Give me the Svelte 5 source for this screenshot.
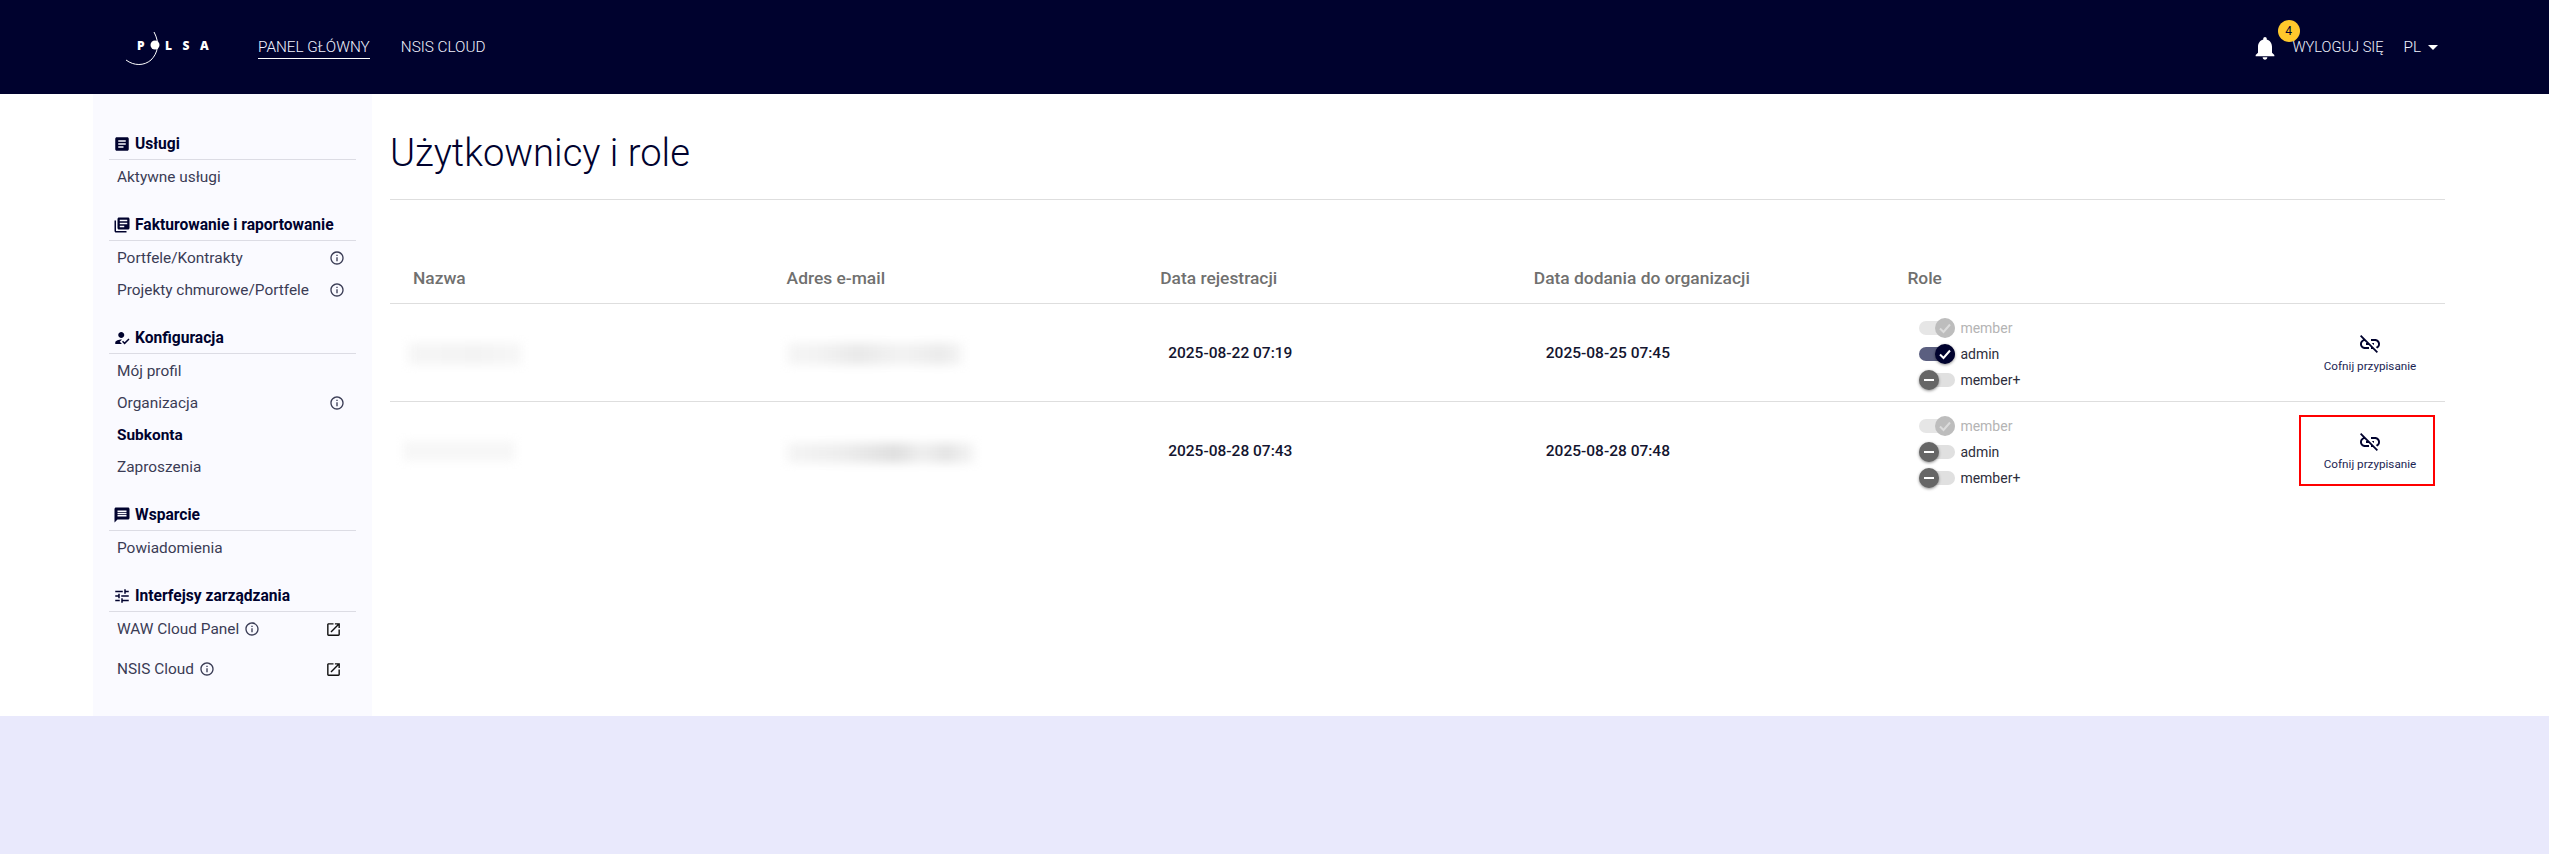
<script>
  const icons = {
    article: 'M19 3H5c-1.1 0-2 .9-2 2v14c0 1.1.9 2 2 2h14c1.1 0 2-.9 2-2V5c0-1.1-.9-2-2-2zm-5 14H7v-2h7v2zm3-4H7v-2h10v2zm0-4H7V7h10v2z',
    books: 'M4 6H2v14c0 1.1.9 2 2 2h14v-2H4V6zm16-4H8c-1.1 0-2 .9-2 2v12c0 1.1.9 2 2 2h12c1.1 0 2-.9 2-2V4c0-1.1-.9-2-2-2zm-1 9H9V9h10v2zm-4 4H9v-2h6v2zm4-8H9V5h10v2z',
    reg: 'M9 17l3-2.94c-.39-.04-.68-.06-1-.06-2.67 0-8 1.34-8 4v2h9l-3-3zm2-5c2.21 0 4-1.79 4-4s-1.79-4-4-4-4 1.79-4 4 1.79 4 4 4zM15.47 20.5L12 17l1.4-1.41 2.07 2.08 5.13-5.17 1.4 1.41z',
    message: 'M20 2H4c-1.1 0-1.99.9-1.99 2L2 22l4-4h14c1.1 0 2-.9 2-2V4c0-1.1-.9-2-2-2zm-2 12H6v-2h12v2zm0-3H6V9h12v2zm0-3H6V6h12v2z',
    tune: 'M3 17v2h6v-2H3zM3 5v2h10V5H3zm10 16v-2h8v-2h-8v-2h-2v6h2zM7 9v2H3v2h4v2h2V9H7zm14 4v-2H11v2h10zm-6-4h2V7h4V5h-4V3h-2v6z',
    open: 'M19 19H5V5h7V3H5c-1.11 0-2 .9-2 2v14c0 1.1.89 2 2 2h14c1.1 0 2-.9 2-2v-7h-2v7zM14 3v2h3.59l-9.83 9.83 1.41 1.41L19 6.41V10h2V3h-7z',
    info: 'M11 7h2v2h-2zm0 4h2v6h-2zm1-9C6.48 2 2 6.48 2 12s4.48 10 10 10 10-4.48 10-10S17.52 2 12 2zm0 18c-4.41 0-8-3.59-8-8s3.59-8 8-8 8 3.59 8 8-3.59 8-8 8z',
    bell: 'M12 22c1.1 0 2-.9 2-2h-4c0 1.1.89 2 2 2zm6-6v-5c0-3.07-1.64-5.64-4.5-6.32V4c0-.83-.67-1.5-1.5-1.5s-1.5.67-1.5 1.5v.68C7.63 5.36 6 7.92 6 11v5l-2 2v1h16v-1l-2-2z',
    unlink: 'M17 7h-4v1.9h4c1.71 0 3.1 1.39 3.1 3.1 0 1.43-.98 2.63-2.31 2.98l1.46 1.46C20.88 15.61 22 13.95 22 12c0-2.76-2.24-5-5-5zm-1 4h-2.19l2 2H16zM2 4.27l3.11 3.11C3.29 8.12 2 9.91 2 12c0 2.76 2.24 5 5 5h4v-1.9H7c-1.71 0-3.1-1.39-3.1-3.1 0-1.59 1.21-2.9 2.76-3.07L8.73 11H8v2h2.73L13 15.27V17h1.73l4.01 4L20 19.74 3.27 3 2 4.27z'
  };

  const menu = [
    { title: 'Usługi', icon: 'article', items: [{ label: 'Aktywne usługi' }] },
    {
      title: 'Fakturowanie i raportowanie',
      icon: 'books',
      items: [
        { label: 'Portfele/Kontrakty', info: true },
        { label: 'Projekty chmurowe/Portfele', info: true }
      ]
    },
    {
      title: 'Konfiguracja',
      icon: 'reg',
      items: [
        { label: 'Mój profil' },
        { label: 'Organizacja', info: true },
        { label: 'Subkonta', active: true },
        { label: 'Zaproszenia' }
      ]
    },
    { title: 'Wsparcie', icon: 'message', items: [{ label: 'Powiadomienia' }] },
    {
      title: 'Interfejsy zarządzania',
      icon: 'tune',
      external: true,
      items: [
        { label: 'WAW Cloud Panel', inline: true },
        { label: 'NSIS Cloud', inline: true }
      ]
    }
  ];

  const users = [
    {
      registered: '2025-08-22 07:19',
      added: '2025-08-25 07:45',
      nameBlur: 'blur-a',
      mailBlur: 'blur-b',
      admin: true,
      highlight: false
    },
    {
      registered: '2025-08-28 07:43',
      added: '2025-08-28 07:48',
      nameBlur: 'blur-c',
      mailBlur: 'blur-d',
      admin: false,
      highlight: true
    }
  ];
</script>

{#snippet icon(name, cls)}
  <svg class={cls} viewBox="0 0 24 24" aria-hidden="true"><path d={icons[name]} fill="currentColor" /></svg>
{/snippet}

{#snippet toggle(on)}
  <span class="track" class:on>
    <span class="thumb">
      {#if on}
        <svg class="check" viewBox="0 0 20 20" aria-hidden="true"><path d="M5 10.5l3.5 3.5L15 6.5" fill="none" stroke="currentColor" stroke-width="2" /></svg>
      {:else}
        <i class="dash"></i>
      {/if}
    </span>
  </span>
{/snippet}

<header class="topbar">
  <div class="logo">
    <svg class="logo-mark" viewBox="0 0 60 40" aria-hidden="true">
      <path d="M30 1 C36 12 34 22 27 29 C20 35 10 35 2 29" fill="none" stroke="#fff" stroke-width="1" />
      <circle cx="31" cy="14" r="4.5" fill="#fff" />
    </svg>
    <span class="logo-text">P<i></i>LSA</span>
  </div>
  <nav class="nav">
    <a class="nav-link current" href="#top">PANEL GŁÓWNY</a>
    <a class="nav-link" href="#top">NSIS CLOUD</a>
  </nav>
  <div class="top-right">
    <span class="bell">
      {@render icon('bell', 'bell-icon')}
      <b class="badge">4</b>
    </span>
    <a class="nav-link logout" href="#top">WYLOGUJ SIĘ</a>
    <span class="lang">PL <i class="caret"></i></span>
  </div>
</header>

<div class="page">
  <aside class="sidebar">
    {#each menu as section}
      <section class="section">
        <h3 class="section-title">
          {@render icon(section.icon, 'section-icon')}
          {section.title}
        </h3>
        {#each section.items as item}
          <div class="item" class:active={item.active} class:tall={section.external}>
            <span class="item-label">
              {item.label}
              {#if item.inline}{@render icon('info', 'info-icon')}{/if}
            </span>
            {#if item.info}{@render icon('info', 'info-icon')}{/if}
            {#if section.external}{@render icon('open', 'open-icon')}{/if}
          </div>
        {/each}
      </section>
    {/each}
  </aside>

  <main class="content">
    <h1 class="title">Użytkownicy i role</h1>
    <div class="table">
      <div class="row head">
        <div>Nazwa</div>
        <div>Adres e-mail</div>
        <div>Data rejestracji</div>
        <div>Data dodania do organizacji</div>
        <div>Role</div>
        <div></div>
      </div>
      {#each users as user}
        <div class="row body">
          <div class="cell"><span class="blurred {user.nameBlur}"></span></div>
          <div class="cell"><span class="blurred {user.mailBlur}"></span></div>
          <div class="cell date">{user.registered}</div>
          <div class="cell date second">{user.added}</div>
          <div class="roles">
            <label class="role disabled">{@render toggle(true)}member</label>
            <label class="role">{@render toggle(user.admin)}admin</label>
            <label class="role">{@render toggle(false)}member+</label>
          </div>
          <div class="cell action-cell">
            <button class="unassign" class:marked={user.highlight}>
              {@render icon('unlink', 'unlink-icon')}
              <span>Cofnij przypisanie</span>
            </button>
          </div>
        </div>
      {/each}
    </div>
  </main>
</div>

<style>
  :global(body) {
    background: #e9e9fc;
    font-family: Roboto, 'Noto Sans', sans-serif;
    color: #00022e;
  }

  .topbar {
    height: 94px;
    background: #00022e;
    display: flex;
    align-items: center;
    padding: 0 111px 0 122px;
    box-sizing: border-box;
  }

  .logo {
    position: relative;
    width: 90px;
    height: 60px;
    display: flex;
    align-items: center;
    margin-right: 46px;
  }

  .logo-mark {
    position: absolute;
    left: 2px;
    top: 14px;
    width: 60px;
    height: 40px;
  }

  .logo-text {
    position: relative;
    padding-left: 15px;
    color: #fff;
    font-family: 'Open Sans', sans-serif;
    font-size: 12px;
    font-weight: 800;
    letter-spacing: 10.5px;
    white-space: nowrap;
    top: -2px;
  }

  .logo-text i {
    display: inline-block;
    width: 10px;
  }

  .nav {
    display: flex;
    gap: 31px;
  }

  .nav-link {
    color: #f2f4ff;
    font-size: 15.3px;
    font-weight: 300;
    text-decoration: none;
    white-space: nowrap;
    line-height: 22px;
    border-bottom: 1px solid transparent;
  }

  .nav-link.current {
    border-bottom-color: #fff;
  }

  .nav-link.logout {
    font-size: 14.6px;
  }

  .top-right {
    margin-left: auto;
    display: flex;
    align-items: center;
  }

  .bell {
    position: relative;
    width: 37px;
    height: 26px;
    display: flex;
  }

  .bell-icon {
    width: 28px;
    height: 28px;
    margin-left: -5px;
    color: #fff;
  }

  .badge {
    position: absolute;
    left: 22px;
    top: -14px;
    width: 22px;
    height: 22px;
    border-radius: 50%;
    background: #ffc82c;
    color: #00022e;
    font-size: 12px;
    font-weight: 400;
    line-height: 22px;
    text-align: center;
  }

  .lang {
    margin-left: 20px;
    color: #f2f4ff;
    font-size: 15.3px;
    font-weight: 300;
    display: flex;
    align-items: center;
    gap: 7px;
  }

  .caret {
    width: 0;
    height: 0;
    border: 5px solid transparent;
    border-top-color: #fff;
    border-bottom: 0;
  }

  .page {
    display: flex;
    height: 622px;
    background: #fff;
    padding-left: 93px;
    box-sizing: border-box;
  }

  .sidebar {
    width: 279px;
    flex: none;
    background: #fafaff;
    box-sizing: border-box;
    padding: 37px 16px 0;
  }

  .section {
    margin-bottom: 20px;
  }

  .section-title {
    margin: 0;
    height: 25px;
    display: flex;
    align-items: center;
    gap: 4px;
    padding: 0 0 3px 4px;
    border-bottom: 1px solid #dcdce4;
    font-size: 15.6px;
    font-weight: 700;
    color: #00022e;
    box-sizing: content-box;
    white-space: nowrap;
  }

  .section-icon {
    width: 18px;
    height: 18px;
  }

  .item {
    height: 32px;
    box-sizing: border-box;
    display: flex;
    align-items: center;
    justify-content: space-between;
    padding: 2px 11px 0 8px;
    font-size: 15.4px;
    color: #3a3c55;
  }

  .item.tall {
    height: 40px;
    padding-right: 14px;
  }

  .item.tall:first-of-type {
    margin-top: -4px;
  }

  .item.active {
    font-weight: 700;
    color: #00022e;
  }

  .item-label {
    display: flex;
    align-items: center;
    gap: 5px;
  }

  .info-icon {
    width: 16px;
    height: 16px;
    color: #3a3c55;
  }

  .open-icon {
    width: 17px;
    height: 17px;
    color: #111;
  }

  .content {
    flex: 1;
    min-width: 0;
    padding: 34px 104px 0 18px;
  }

  .title {
    margin: 0;
    height: 71px;
    border-bottom: 1px solid #dedede;
    font-size: 38.2px;
    font-weight: 300;
    line-height: 50px;
    color: #00022e;
  }

  .table {
    margin-top: 54px;
  }

  .row {
    display: grid;
    grid-template-columns: repeat(5, 373.6px) 1fr;
  }

  .row:not(:last-child) {
    border-bottom: 1px solid #dedede;
  }

  .head {
    height: 49px;
    align-items: center;
    font-size: 17.4px;
    font-weight: 500;
    color: #70706f;
  }

  .head > div {
    padding-left: 23px;
    padding-bottom: 2px;
  }

  .body {
    height: 97px;
    align-items: center;
  }

  .cell {
    display: flex;
    align-items: center;
  }

  .date {
    padding-left: 31px;
    font-size: 15.5px;
    font-weight: 500;
    color: #14152f;
  }

  .date.second {
    padding-left: 35px;
  }

  .blurred {
    display: block;
    filter: blur(5px);
  }

  .blur-a {
    width: 114px;
    height: 22px;
    margin-left: 18px;
    margin-top: 2px;
    background: linear-gradient(90deg, #f6f6f6, #f3f3f3 60%, #f7f7f7);
  }

  .blur-b {
    width: 176px;
    height: 22px;
    margin-left: 23px;
    margin-top: 2px;
    background: linear-gradient(90deg, #f6f6f6, #f2f2f2 20%, #e9e9e9 40%, #f3f3f3 65%, #ebebeb 88%, #f7f7f7);
  }

  .blur-c {
    width: 112px;
    height: 20px;
    margin-left: 13px;
    background: #f7f7f7;
  }

  .blur-d {
    width: 188px;
    height: 20px;
    margin-left: 23px;
    margin-top: 4px;
    background: linear-gradient(90deg, #f5f5f5, #ededed 30%, #dfdfdf 58%, #efefef 72%, #e4e4e4 85%, #f7f7f7);
  }

  .roles {
    display: flex;
    flex-direction: column;
    gap: 6px;
    padding: 2px 0 0 35px;
  }

  .role {
    display: flex;
    align-items: center;
    gap: 5px;
    height: 20px;
    font-size: 14px;
    color: #2e2e3c;
  }

  .role.disabled {
    color: #b4b4b4;
  }

  .track {
    position: relative;
    width: 36px;
    height: 14px;
    border-radius: 7px;
    background: #e0e0e0;
    flex: none;
  }

  .track.on {
    background: #5b5f80;
  }

  .thumb {
    position: absolute;
    left: 0;
    top: -3px;
    width: 20px;
    height: 20px;
    border-radius: 50%;
    background: #666;
    box-shadow: 0 1px 3px rgba(0, 0, 0, 0.45);
    color: #fff;
    display: flex;
    align-items: center;
    justify-content: center;
  }

  .track.on .thumb {
    left: 16px;
    background: #00022e;
  }

  .check {
    width: 20px;
    height: 20px;
  }

  .dash {
    width: 10px;
    height: 2px;
    background: #fff;
  }

  .disabled .track.on {
    background: #e6e6e6;
  }

  .disabled .track.on .thumb {
    background: #bdbdbd;
    box-shadow: none;
    color: #dcdcdc;
  }

  .action-cell {
    justify-content: flex-end;
    padding-right: 10px;
  }

  .unassign {
    width: 136px;
    height: 71px;
    box-sizing: border-box;
    border: 2px solid transparent;
    background: none;
    padding: 0 0 0 6px;
    display: flex;
    flex-direction: column;
    align-items: center;
    justify-content: center;
    gap: 3px;
    font-family: inherit;
    font-size: 11.7px;
    color: #1b2553;
  }

  .unassign.marked {
    border-color: #f00;
  }

  .unlink-icon {
    width: 24px;
    height: 24px;
    color: #00022e;
  }
</style>
